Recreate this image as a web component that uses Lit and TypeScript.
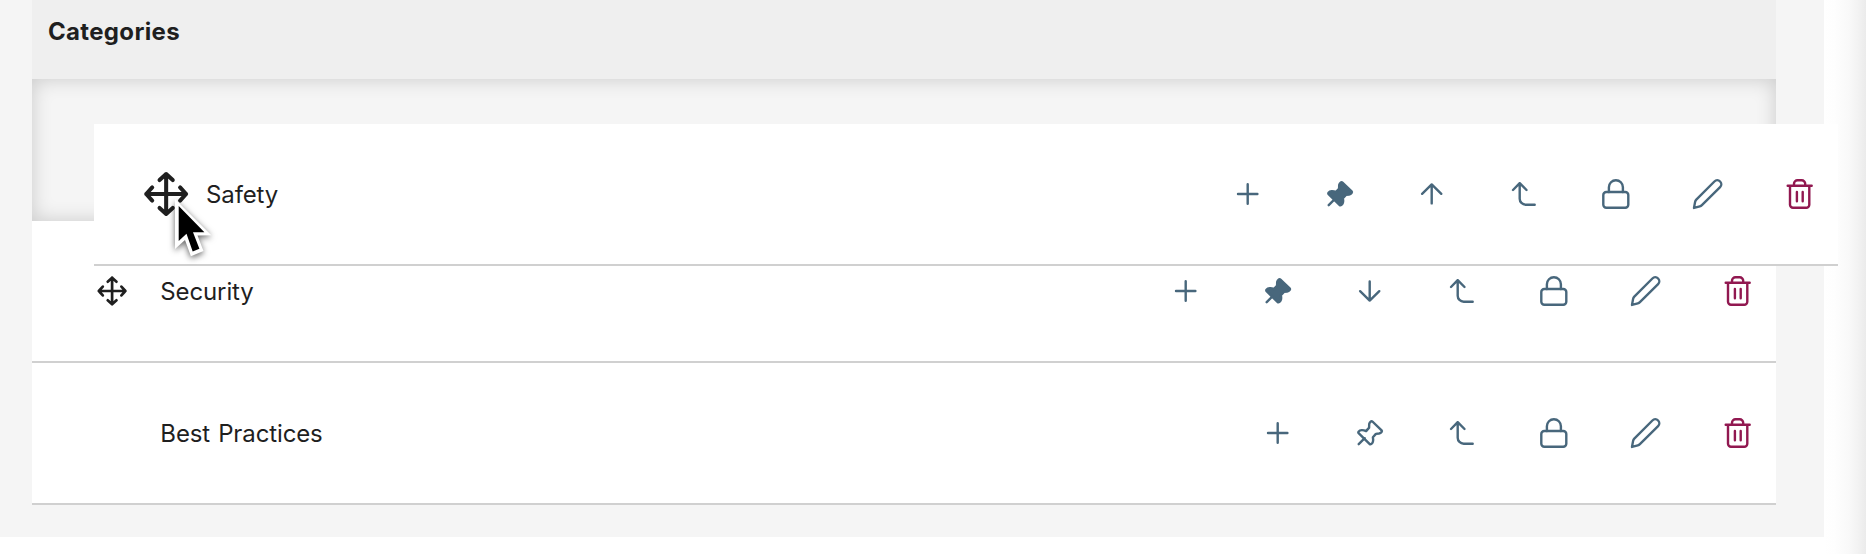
import { LitElement, html, svg, css } from "lit";
import { customElement, property } from "lit/decorators.js";

const PIN = "M17.2 4.5Q17.9 3.7 18.7 4.5L27.9 13.4Q28.6 14.2 27.9 15Q27 16.2 25.3 16.5L22.2 16.9L19.2 20.3Q19.7 23 19.2 24.8Q18.8 26.3 17.6 27Q16.6 27.6 15.8 26.8L4.9 16.2Q4.3 15.4 4.8 14.7Q6 13.2 8 13.1Q10 13 12.4 14.1L15.4 10.6L15.5 7Q15.8 5.6 17.2 4.5Z";

const ICONS: Record<string, unknown> = {
  plus: svg`<path d="M16 6.3V25.7M6.3 16H25.7"/>`,
  pinned: svg`<path d=${PIN} fill="currentColor"/><path d="M11 21.2L5 27.2"/>`,
  pin: svg`<path d=${PIN}/><path d="M11 21.2L5 27.2"/>`,
  up: svg`<path d="M16 25.4V6.4M6.4 15.8L16 6.4L25.6 15.8"/>`,
  down: svg`<path d="M16 6.4V25.6M6.4 16.2L16 25.6L25.6 16.2"/>`,
  parent: svg`<path d="M5.3 12L12 5.2L18.8 12M12 5.2V20.7A6 6 0 0 0 18 26.7H27"/>`,
  lock: svg`<rect x="3.6" y="14" width="25" height="15.7" rx="3"/><path d="M9.2 14V9.2A7 7 0 0 1 23.2 9.2V14"/>`,
  edit: svg`<path d="M2.3 29.9L3.4 23.9Q3.7 22.5 4.6 21.6L22.7 3.5A4 4 0 0 1 28.4 9.2L10.2 27.1Q9.3 28 8.1 28.3Z"/>`,
  trash: svg`<path d="M4 7.8H28M6.3 7.8V26.7A3 3 0 0 0 9.3 29.7H22.6A3 3 0 0 0 25.6 26.7V7.8M10.3 7.8V5.8A3.5 3.5 0 0 1 13.8 2.3H18A3.5 3.5 0 0 1 21.5 5.8V7.8M13.2 14V23.2M19 14V23.2"/>`,
  move: svg`<path stroke-width="2.7" d="M16.4 2.7V29.3M3.1 16H29.7M12 6.7L16.4 2.7L20.8 6.7M12 25.3L16.4 29.3L20.8 25.3M7.1 11.6L3.1 16L7.1 20.4M25.7 11.6L29.7 16L25.7 20.4"/>`,
};

@customElement("ui-icon")
class UiIcon extends LitElement {
  @property() name = "";
  static styles = css`
    :host { display: block; width: 32px; height: 32px; flex: none; }
    svg { display: block; width: 100%; height: 100%; overflow: visible; }
  `;
  render() {
    return html`<svg viewBox="0.3 0 32 32" fill="none" stroke="currentColor" stroke-width="2.4" stroke-linecap="round" stroke-linejoin="round">${ICONS[this.name]}</svg>`;
  }
}

@customElement("category-row")
class CategoryRow extends LitElement {
  @property() label = "";
  @property({ type: Array }) actions: string[] = [];
  @property({ type: Boolean }) movable = false;
  @property({ type: Boolean, reflect: true }) dragging = false;
  static styles = css`
    :host {
      display: flex; align-items: center; box-sizing: border-box; height: 142px;
      padding: 0 22px 0 64px; background: #fff; border-bottom: 2px solid #d0d0d0;
      color: #1f1f1f;
    }
    .handle { width: 32px; height: 32px; margin-right: 32.3px; flex: none; }
    .name {
      flex: 1; padding-top: 2px; font-size: 24px; line-height: 36px; white-space: nowrap;
      letter-spacing: -0.12px; word-spacing: 1.5px;
    }
    .actions { display: flex; gap: 60px; color: #48677c; }
    .danger { color: #911850; }
    :host([dragging]) { padding-left: 48px; }
    :host([dragging]) .handle { width: 48px; height: 48px; margin-right: 16px; }
    :host([dragging]) .handle ui-icon { width: 48px; height: 48px; }
  `;
  render() {
    return html`
      <div class="handle">${this.movable ? html`<ui-icon name="move"></ui-icon>` : ""}</div>
      <div class="name">${this.label}</div>
      <div class="actions">
        ${this.actions.map((a) => html`<ui-icon class=${a === "trash" ? "danger" : ""} name=${a}></ui-icon>`)}
      </div>`;
  }
}

@customElement("app-root")
class AppRoot extends LitElement {
  static styles = css`
    :host {
      display: flex; position: relative; height: 554px; overflow: hidden; background: #fff;
      font-family: Inter, "Liberation Sans", sans-serif;
    }
    .panel { box-sizing: border-box; width: 1824px; height: 537px; padding: 0 48px 0 32px; background: #f5f5f5; }
    .head {
      box-sizing: border-box; height: 79px; padding: 14px 16px; background: #efefef;
      color: #1f1f1f; font-size: 24px; font-weight: 700; line-height: 36px; letter-spacing: 0.33px;
    }
    .slot { height: 142px; background: #f5f5f5; box-shadow: inset 0 0 20px rgba(0, 0, 0, 0.18); }
    .edge { flex: 1; background: linear-gradient(90deg, #fff 0, #fefefe 25%, #f9f9f9 58%, #f2f2f2 82%, #ebebeb 100%); }
    .dragged { position: absolute; left: 94px; top: 124px; width: 1744px; }
    .cursor { position: absolute; left: 169px; top: 194px; width: 50px; height: 70px; overflow: visible; filter: drop-shadow(0 2px 3px rgba(0, 0, 0, 0.6)); }
  `;
  render() {
    return html`
      <div class="panel">
        <div class="head">Categories</div>
        <div class="slot"></div>
        <category-row label="Security" movable .actions=${["plus", "pinned", "down", "parent", "lock", "edit", "trash"]}></category-row>
        <category-row label="Best Practices" .actions=${["plus", "pin", "parent", "lock", "edit", "trash"]}></category-row>
      </div>
      <div class="edge"></div>
      <category-row class="dragged" label="Safety" movable dragging .actions=${["plus", "pinned", "up", "parent", "lock", "edit", "trash"]}></category-row>
      <svg class="cursor" viewBox="0 0 50 70">
        <path d="M6 5V55L16 46L21.9 62.3L34.5 57L28.5 41.5L42.3 41.3Z" fill="#fff"/>
        <path d="M9.7 12V47L17.5 39.7L23.7 57.5L30.4 54.8L24 38.2H35.4Z" fill="#000"/>
      </svg>`;
  }
}
